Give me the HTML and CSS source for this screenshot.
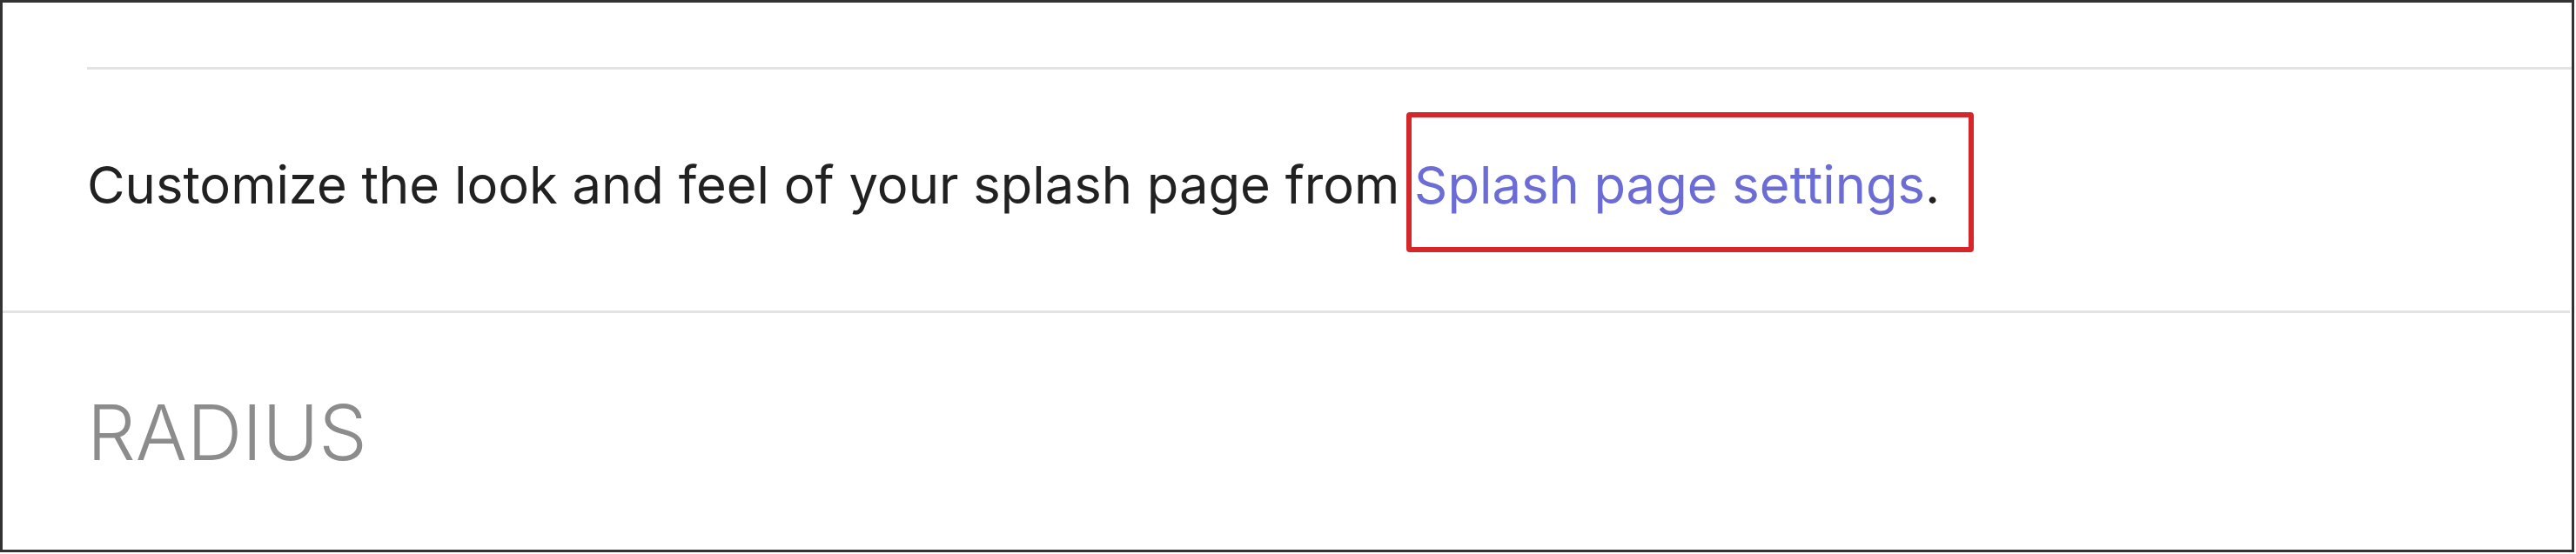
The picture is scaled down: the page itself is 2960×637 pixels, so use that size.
FILE: index.html
```html
<!DOCTYPE html>
<html lang="en">
<head>
    <meta charset="UTF-8">
    <meta name="viewport" content="width=device-width, initial-scale=1.0">
    <title>Splash page</title>
    <link rel="stylesheet" href="styles.css">
</head>
<body>
    <div class="frame">
        <div class="splash-info">
            <p class="hint">
                Customize the look and feel of your splash page from
                <span class="highlight"><a href="#" class="link">Splash page settings</a>.</span>
            </p>
        </div>

        <div class="section">
            <h2 class="section-title">RADIUS</h2>
        </div>
    </div>
</body>
</html>
```

FILE: styles.css
```css
* {
    margin: 0;
    padding: 0;
    box-sizing: border-box;
}

body {
    background: white;
    font-family: Inter, "Noto Sans", sans-serif;
    color: #212121;
}

.frame {
    width: 2958px;
    height: 635px;
    border: 3px solid #333;
    overflow: hidden;
}

.splash-info {
    margin: 74px 0 0 97px;
    border-top: 3px solid #e3e3e3;
}

.hint {
    margin-top: 100px;
    font-size: 59.7px;
    line-height: 64px;
    white-space: nowrap;
}

.link {
    color: #6c6cd6;
    text-decoration: none;
}

/* annotation box drawn over the link */
.highlight {
    position: relative;
}

.highlight::after {
    content: "";
    position: absolute;
    left: -9px;
    right: -39px;
    top: -47px;
    bottom: -42px;
    border: 6px solid #d6262a;
    border-radius: 4px;
}

.section {
    margin-top: 113px;
    border-top: 3px solid #e3e3e3;
    margin-right: 2px;
}

.section-title {
    margin: 93px 0 0 97px;
    font-size: 88px;
    line-height: 88px;
    font-weight: 300;
    color: #8c8c8c;
}
```
